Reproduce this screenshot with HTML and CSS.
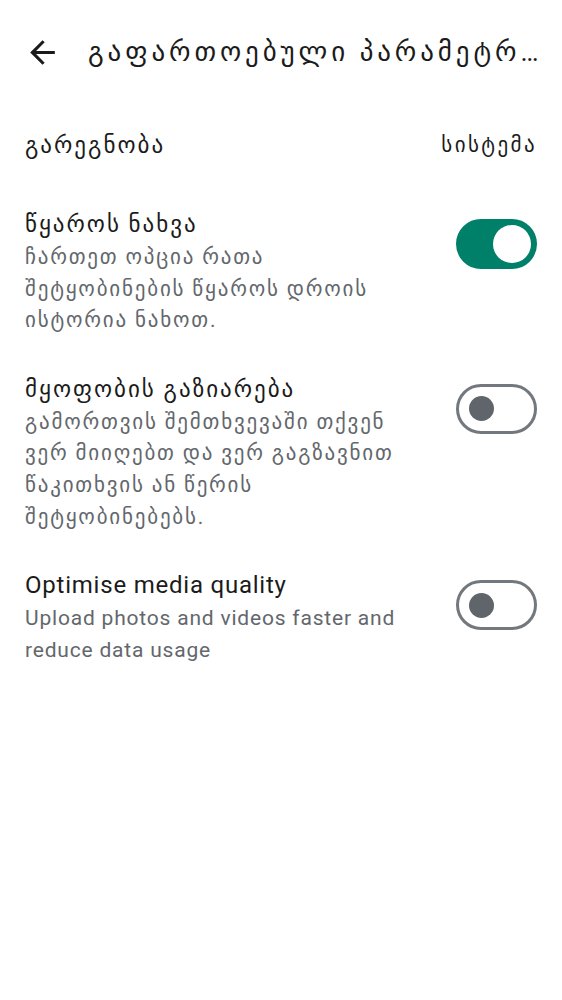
FILE: index.html
```html
<!DOCTYPE html>
<html lang="ka">
<head>
<meta charset="utf-8">
<link rel="stylesheet" href="styles.css">
</head>
<body>
<header class="appbar">
  <svg class="back" width="37" height="37" viewBox="0 0 24 24"><path d="M20 11H7.83l5.59-5.59L12 4l-8 8 8 8 1.41-1.41L7.83 13H20v-2z" fill="#1b1b1b"/></svg>
  <h1 class="title">გაფართოებული პარამეტრები</h1>
</header>
<main class="list">
  <div class="row simple">
    <span class="label">გარეგნობა</span>
    <span class="value">სისტემა</span>
  </div>
  <div class="row item">
    <div class="text">
      <div class="label">წყაროს ნახვა</div>
      <div class="sub">ჩართეთ ოპცია რათა შეტყობინების წყაროს დროის ისტორია ნახოთ.</div>
    </div>
    <div class="switch on"><span class="thumb"></span></div>
  </div>
  <div class="row item">
    <div class="text">
      <div class="label">მყოფობის გაზიარება</div>
      <div class="sub">გამორთვის შემთხვევაში თქვენ ვერ მიიღებთ და ვერ გაგზავნით წაკითხვის ან წერის შეტყობინებებს.</div>
    </div>
    <div class="switch"><span class="thumb"></span></div>
  </div>
  <div class="row item en" lang="en">
    <div class="text">
      <div class="label">Optimise media quality</div>
      <div class="sub">Upload photos and videos faster and reduce data usage</div>
    </div>
    <div class="switch"><span class="thumb"></span></div>
  </div>
</main>
</body>
</html>
```
FILE: styles.css
```css
* { box-sizing: border-box; }
body {
  margin: 0;
  background: #fff;
  font-family: Roboto, "Noto Sans", "DejaVu Sans", sans-serif;
  color: #1b1b1b;
}
.appbar {
  display: flex;
  align-items: center;
  height: 104px;
  padding: 0 14px 0 24px;
  gap: 27px;
}
.back { flex: none; }
.title {
  margin: 0;
  font-size: 27px;
  letter-spacing: 3.9px;
  font-weight: 400;
  white-space: nowrap;
  overflow: hidden;
  text-overflow: ellipsis;
  min-width: 0;
}
.list { display: flex; flex-direction: column; }
.row {
  display: flex;
  justify-content: space-between;
  padding: 0 25px;
}
.simple {
  padding-top: 24px;
  padding-bottom: 26px;
  line-height: 34px;
}
.item {
  padding-top: 18px;
  padding-bottom: 17px;
  gap: 31px;
  align-items: flex-start;
}
.text { flex: 1; min-width: 0; }
.label { font-size: 23px; letter-spacing: 2px; line-height: 35px; }
.value { font-size: 21px; letter-spacing: 2.4px; line-height: 34px; }
.sub { font-size: 21px; letter-spacing: 1.8px; line-height: 31.6px; color: #63676c; }
.en .label { font-size: 24px; letter-spacing: 0.78px; }
.en .sub { font-size: 21px; letter-spacing: 0.8px; }
.switch {
  flex: none;
  width: 81px;
  height: 50px;
  margin-top: 12px;
  border-radius: 25px;
  border: 3px solid #72787d;
  display: flex;
  align-items: center;
  padding-left: 10px;
}
.thumb {
  width: 25px;
  height: 25px;
  border-radius: 50%;
  background: #5f656b;
}
.switch.on {
  background: #008069;
  border-color: #008069;
  justify-content: flex-end;
  padding-right: 3px;
}
.switch.on .thumb {
  width: 38px;
  height: 38px;
  background: #fff;
}
```
